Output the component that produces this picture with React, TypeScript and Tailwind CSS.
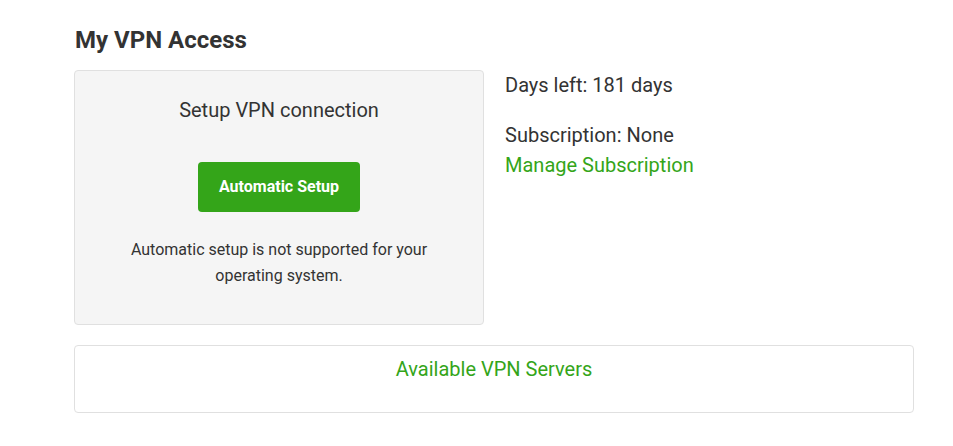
export default function App() {
  return (
    <div className="min-h-[446px] bg-white text-[#333]" style={{ fontFamily: "Roboto, 'Liberation Sans', sans-serif" }}>
      <div className="ml-[74px] w-[840px] pt-[24px]">
        <h1 className="text-[24px] font-bold leading-[32px] pl-[1px]">My VPN Access</h1>
        <div className="mt-[14px] flex gap-[21px]">
          <div className="w-[410px] h-[255px] bg-[#f5f5f5] border border-[#e0e0e0] rounded-[4px] flex flex-col items-center pt-[25px]">
            <div className="text-[20px] leading-[28px]">Setup VPN connection</div>
            <button className="mt-[38px] w-[162px] h-[50px] rounded-[4px] bg-[#34a519] text-white text-[16px] font-bold">Automatic Setup</button>
            <p className="mt-[25px] text-[16px] leading-[26px] text-center w-[340px]">Automatic setup is not supported for your operating system.</p>
          </div>
          <div className="text-[20px]">
            <div className="leading-[30px]">Days left: 181 days</div>
            <div className="mt-[20px] leading-[30px]">Subscription: None</div>
            <a className="block leading-[30px] text-[#34a519]" href="#">Manage Subscription</a>
          </div>
        </div>
        <div className="mt-[20px] h-[68px] border border-[#e0e0e0] rounded-[4px] flex justify-center pt-[9px]">
          <span className="text-[20px] leading-[28px] text-[#34a519]">Available VPN Servers</span>
        </div>
      </div>
    </div>
  );
}
